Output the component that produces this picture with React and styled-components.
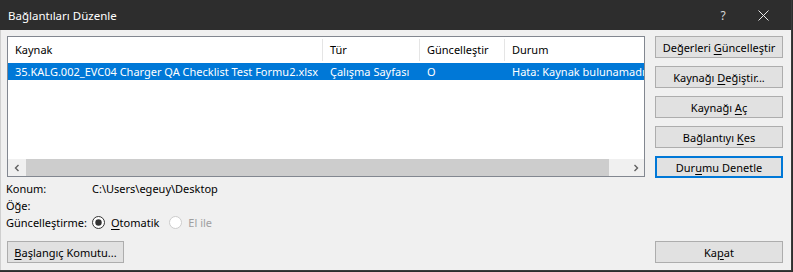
import styled, { createGlobalStyle } from 'styled-components';

const Global = createGlobalStyle`
  html, body {
    margin: 0;
    padding: 0;
    background: #2d2d2d;
  }
  body {
    width: 793px;
    height: 272px;
    overflow: hidden;
    font-family: "Segoe UI", "Noto Sans", "Liberation Sans", sans-serif;
    font-size: 11px;
    color: #000;
  }
`

const Window = styled.div`
  width: 791px;
  height: 270px;
  display: flex;
  flex-direction: column;
  background: #f0f0f0;
  border-right: 1px solid #3a3a3a;
  border-bottom: 1px solid #3a3a3a;
`

const TitleBar = styled.div`
  height: 30px;
  flex: none;
  display: flex;
  align-items: center;
  background: #2d2d2d;
  color: #fff;
  padding: 0 8px 0 8px;
`

const Title = styled.div`
  flex: 1;
  font-size: 11.5px;
  padding-top: 1px;
`

const TitleButton = styled.div`
  width: 40px;
  height: 30px;
  display: flex;
  align-items: center;
  justify-content: center;
  color: #d8d8d8;
  font-size: 12px;
`

const Body = styled.div`
  flex: 1;
  display: flex;
  flex-direction: column;
  padding: 6px 8px 7px 5px;
  border-left: 1px solid #cfcfcf;
`

const Top = styled.div`
  display: flex;
  gap: 10px;
`

const LeftCol = styled.div`
  width: 639px;
  display: flex;
  flex-direction: column;
`

const ListBox = styled.div`
  margin-left: 1px;
  height: 141px;
  box-sizing: border-box;
  border: 1px solid #828790;
  background: #fff;
  display: flex;
  flex-direction: column;
  overflow: hidden;
`

const Grid = styled.div`
  display: grid;
  grid-template-columns: 315px 97px 85px 1fr;
  margin-top: 2px;
`

const HeadCell = styled.div`
  height: 22px;
  line-height: 22px;
  padding-left: 7px;
  border-right: ${p => (p.$last ? 'none' : '1px solid #e5e5e5')};
  white-space: nowrap;
  overflow: hidden;
`

const Cell = styled.div`
  height: 17px;
  line-height: 17px;
  margin-top: 2px;
  padding-left: 7px;
  background: #0078d7;
  color: #fff;
  white-space: nowrap;
  overflow: hidden;
`

const Spacer = styled.div`
  flex: 1;
`

const HScroll = styled.div`
  height: 17px;
  display: flex;
  background: #f0f0f0;
`

const Arrow = styled.div`
  width: 17px;
  height: 17px;
  display: flex;
  align-items: center;
  justify-content: center;
`

const Thumb = styled.div`
  flex: 1;
  background: #cdcdcd;
  margin: 0 18px 0 1px;
`

const InfoRow = styled.div`
  display: flex;
  align-items: center;
  height: 17px;
  white-space: nowrap;
`

const Info = styled.div`
  margin-top: 3px;
`

const Label = styled.div`
  width: 86px;
`

const Radio = styled.span`
  display: inline-flex;
  align-items: center;
  gap: 6px;
  margin-right: 10px;
  color: ${p => (p.$disabled ? '#a0a0a0' : '#000')};
`

const RightCol = styled.div`
  display: flex;
  flex-direction: column;
  gap: 8px;
  width: 128px;
`

const Button = styled.div`
  box-sizing: border-box;
  height: 22px;
  width: ${p => p.$w || '128px'};
  display: flex;
  align-items: center;
  justify-content: center;
  background: #e1e1e1;
  border: ${p => (p.$focus ? '2px solid #0078d7' : '1px solid #adadad')};
  white-space: nowrap;
`

const Footer = styled.div`
  margin-top: auto;
  padding-left: 1px;
  display: flex;
  justify-content: space-between;
`

const U = styled.u`
  text-underline-offset: 2px;
`

const Chevron = ({ dir }) => (
  <svg width="8" height="8" viewBox="0 0 8 8">
    <path
      d={dir === 'left' ? 'M5.5 1 L2.5 4 L5.5 7' : 'M2.5 1 L5.5 4 L2.5 7'}
      fill="none"
      stroke="#606060"
      strokeWidth="1.4"
    />
  </svg>
)

const RadioIcon = ({ checked, disabled }) => (
  <svg width="13" height="13" viewBox="0 0 13 13">
    <circle cx="6.5" cy="6.5" r="6" fill="#fff" stroke={disabled ? '#cccccc' : '#333'} />
    {checked && <circle cx="6.5" cy="6.5" r="3.2" fill="#333" />}
  </svg>
)

const App = () => {
  return (
    <>
      <Global />
      <Window>
        <TitleBar>
          <Title>Bağlantıları Düzenle</Title>
          <TitleButton>?</TitleButton>
          <TitleButton>
            <svg width="11" height="11" viewBox="0 0 11 11">
              <path d="M0.5 0.5 L10.5 10.5 M10.5 0.5 L0.5 10.5" stroke="#e8e8e8" strokeWidth="1" />
            </svg>
          </TitleButton>
        </TitleBar>
        <Body>
          <Top>
            <LeftCol>
              <ListBox>
                <Grid>
                  <HeadCell>Kaynak</HeadCell>
                  <HeadCell>Tür</HeadCell>
                  <HeadCell>Güncelleştir</HeadCell>
                  <HeadCell $last>Durum</HeadCell>
                  <Cell>35.KALG.002_EVC04 Charger QA Checklist Test Formu2.xlsx</Cell>
                  <Cell>Çalışma Sayfası</Cell>
                  <Cell>O</Cell>
                  <Cell>Hata: Kaynak bulunamadı</Cell>
                </Grid>
                <Spacer />
                <HScroll>
                  <Arrow><Chevron dir="left" /></Arrow>
                  <Thumb />
                  <Arrow><Chevron dir="right" /></Arrow>
                </HScroll>
              </ListBox>
              <Info>
                <InfoRow><Label>Konum:</Label>C:\Users\egeuy\Desktop</InfoRow>
                <InfoRow><Label>Öğe:</Label></InfoRow>
                <InfoRow>
                  <Label>Güncelleştirme:</Label>
                  <Radio><RadioIcon checked /><span><U>O</U>tomatik</span></Radio>
                  <Radio $disabled><RadioIcon disabled />El ile</Radio>
                </InfoRow>
              </Info>
            </LeftCol>
            <RightCol>
              <Button>Değerleri&nbsp;<U>G</U>üncelleştir</Button>
              <Button>Kaynağı&nbsp;<U>D</U>eğiştir...</Button>
              <Button>Kaynağı&nbsp;<U>A</U>ç</Button>
              <Button>Bağlantıyı&nbsp;<U>K</U>es</Button>
              <Button $focus>Dur<U>u</U>mu Denetle</Button>
            </RightCol>
          </Top>
          <Footer>
            <Button $w="117px"><U>B</U>aşlangıç Komutu...</Button>
            <Button>Ka<U>p</U>at</Button>
          </Footer>
        </Body>
      </Window>
    </>
  )
}

export default App
